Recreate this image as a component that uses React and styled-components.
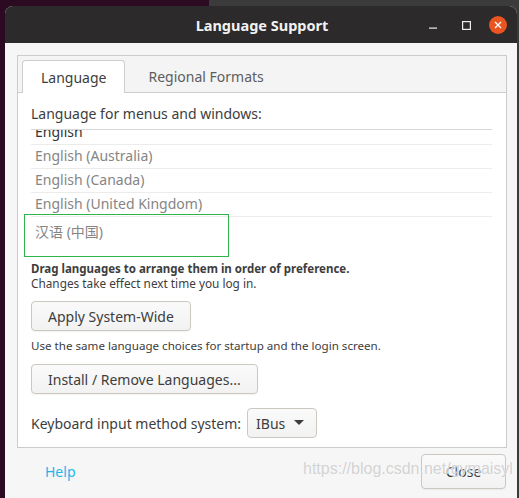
import React from 'react';
import styled, { createGlobalStyle } from 'styled-components';

const GlobalStyle = createGlobalStyle`
  html, body {
    margin: 0;
    padding: 0;
  }
  body {
    font-family: 'Noto Sans', 'Noto Sans CJK SC', sans-serif;
    color: #3d3d3d;
  }
`;

const Desktop = styled.div`
  width: 519px;
  height: 498px;
  padding: 6px 2px 0 5px;
  box-sizing: border-box;
  background: linear-gradient(to right, #2c0a22 0, #2c0a22 209px, #3b3b3b 209px);
  overflow: hidden;
`;

const Window = styled.div`
  position: relative;
  height: 100%;
  border-radius: 8px 8px 0 0;
  overflow: hidden;
  background: #f6f6f7;
  display: flex;
  flex-direction: column;
`;

const TitleBar = styled.div`
  height: 37px;
  flex: none;
  background: #2c2a2a;
  display: flex;
  align-items: center;
  justify-content: center;
  position: relative;
`;

const Title = styled.div`
  color: #f2f2f2;
  font-weight: bold;
  font-size: 14.5px;
  margin-left: 2px;
`;

const Controls = styled.div`
  position: absolute;
  right: 10px;
  top: 10px;
  display: flex;
  align-items: center;
`;

const CtrlBtn = styled.div`
  width: 34px;
  height: 18px;
  display: flex;
  align-items: center;
  justify-content: center;
`;

const CloseCircle = styled.div`
  width: 18px;
  height: 18px;
  border-radius: 50%;
  background: #e95420;
  display: flex;
  align-items: center;
  justify-content: center;
  margin-left: 6px;
`;

const Body = styled.div`
  flex: 1;
  padding: 12px 10px 0 12px;
  display: flex;
  flex-direction: column;
`;

const Notebook = styled.div`
  border: 1px solid #cbcbcb;
  background: #fff;
  height: 393px;
  box-sizing: border-box;
  display: flex;
  flex-direction: column;
`;

const TabStrip = styled.div`
  height: 37px;
  flex: none;
  background: #f4f4f4;
  border-bottom: 1px solid #cdcdcd;
  box-sizing: border-box;
  display: flex;
  align-items: flex-end;
  padding-left: 4px;
`;

const Tab = styled.div`
  height: ${({ $active }) => ($active ? '33px' : '32px')};
  box-sizing: border-box;
  padding: 0 ${({ $active }) => ($active ? '18px' : '22px')};
  display: flex;
  align-items: center;
  font-size: 14px;
  margin-bottom: ${({ $active }) => ($active ? '-1px' : '0')};
  color: ${({ $active }) => ($active ? '#3d3d3d' : '#5d5d5d')};
  background: ${({ $active }) => ($active ? '#fff' : 'transparent')};
  border: ${({ $active }) => ($active ? '1px solid #cdcdcd' : '1px solid transparent')};
  border-bottom: none;
  border-radius: 4px 4px 0 0;
`;

const Page = styled.div`
  position: relative;
  padding: 12px 13px 0 13px;
  display: flex;
  flex-direction: column;
`;

const Label = styled.div`
  font-size: 14px;
  line-height: 18px;
`;

const ListView = styled.div`
  margin-top: 6px;
  margin-right: 1px;
  height: 128px;
  overflow: hidden;
  border-top: 1px solid #d8d8d8;
`;

const ListInner = styled.div`
  margin-top: -9px;
`;

const Row = styled.div`
  height: 24px;
  box-sizing: border-box;
  padding: ${({ $last }) => ($last ? '4px' : '0')} 0 0 4px;
  font-size: 14px;
  line-height: 22px;
  color: ${({ $primary }) => ($primary ? '#333' : '#858585')};
  border-bottom: ${({ $last }) => ($last ? 'none' : '1px solid #ececec')};
`;

const DropHighlight = styled.div`
  position: absolute;
  left: 6px;
  top: 121px;
  width: 205px;
  height: 43px;
  border: 1px solid #2fb44a;
  box-sizing: border-box;
  pointer-events: none;
`;

const Hint = styled.div`
  margin-top: ${({ $bold }) => ($bold ? '3px' : '0')};
  font-size: ${({ $bold }) => ($bold ? '11.5px' : '11.8px')};
  line-height: 15px;
  font-weight: ${({ $bold }) => ($bold ? 'bold' : 'normal')};
`;

const Button = styled.div`
  align-self: flex-start;
  height: 30px;
  box-sizing: border-box;
  padding: 0 16px;
  display: flex;
  align-items: center;
  font-size: 14px;
  color: #3d3d3d;
  border: 1px solid #cdc7c2;
  border-radius: 4px;
  background: linear-gradient(#fafafa, #f2f2f2);
  box-shadow: 0 1px 1px rgba(0, 0, 0, 0.05);
  margin-top: ${({ $mt }) => $mt || 0}px;
`;

const SmallNote = styled.div`
  margin-top: 7px;
  font-size: 11.6px;
  line-height: 15px;
`;

const KbRow = styled.div`
  margin-top: 14px;
  display: flex;
  align-items: center;
  gap: 6px;
  font-size: 14px;
`;

const Combo = styled.div`
  height: 30px;
  box-sizing: border-box;
  padding: 0 12px 0 8px;
  display: flex;
  align-items: center;
  gap: 9px;
  font-size: 14px;
  border: 1px solid #cdc7c2;
  border-radius: 4px;
  background: linear-gradient(#fafafa, #f2f2f2);
`;

const Footer = styled.div`
  position: relative;
  flex: 1;
  display: flex;
  align-items: flex-start;
  justify-content: space-between;
  padding: 6px 0 0 28px;
`;

const HelpLink = styled.div`
  margin-top: 8px;
  font-size: 14px;
  color: #1fb5ec;
`;

const CloseButton = styled(Button)`
  height: 35px;
  width: 85px;
  justify-content: center;
  padding: 0;
  margin-right: 1px;
`;

const Watermark = styled.div`
  position: absolute;
  left: 286px;
  top: 11px;
  font-family: 'Liberation Sans', Arial, sans-serif;
  font-size: 16px;
  line-height: 20px;
  color: rgba(205, 205, 205, 0.9);
  text-shadow: 0 0 1px rgba(255, 255, 255, 0.9);
  pointer-events: none;
  white-space: nowrap;
`;

const languages = [
  'English',
  'English (Australia)',
  'English (Canada)',
  'English (United Kingdom)',
  '汉语 (中国)',
];

const App = () => (
  <>
    <GlobalStyle />
    <Desktop>
      <Window>
        <TitleBar>
          <Title>Language Support</Title>
          <Controls>
            <CtrlBtn>
              <svg width="9" height="9" viewBox="0 0 9 9">
                <rect x="1" y="6.5" width="8" height="1.2" fill="#eee" />
              </svg>
            </CtrlBtn>
            <CtrlBtn>
              <svg width="9" height="9" viewBox="0 0 9 9">
                <rect x="0.6" y="0.6" width="7.8" height="7.8" fill="none" stroke="#eee" strokeWidth="1.2" />
              </svg>
            </CtrlBtn>
            <CloseCircle>
              <svg width="8" height="8" viewBox="0 0 8 8">
                <path d="M1 1L7 7M7 1L1 7" stroke="#fff" strokeWidth="1.4" />
              </svg>
            </CloseCircle>
          </Controls>
        </TitleBar>
        <Body>
          <Notebook>
            <TabStrip>
              <Tab $active>Language</Tab>
              <Tab>Regional Formats</Tab>
            </TabStrip>
            <Page>
              <Label>Language for menus and windows:</Label>
              <ListView>
                <ListInner>
                  {languages.map((l, i) => (
                    <Row key={l} $primary={i === 0} $last={i === languages.length - 1}>
                      {l}
                    </Row>
                  ))}
                </ListInner>
              </ListView>
              <DropHighlight />
              <Hint $bold>Drag languages to arrange them in order of preference.</Hint>
              <Hint>Changes take effect next time you log in.</Hint>
              <Button $mt={10}>Apply System-Wide</Button>
              <SmallNote>Use the same language choices for startup and the login screen.</SmallNote>
              <Button $mt={11}>Install / Remove Languages...</Button>
              <KbRow>
                Keyboard input method system:
                <Combo>
                  IBus
                  <svg width="10" height="6" viewBox="0 0 10 6">
                    <path d="M0 0H10L5 5Z" fill="#3d3d3d" />
                  </svg>
                </Combo>
              </KbRow>
            </Page>
          </Notebook>
          <Footer>
            <HelpLink>Help</HelpLink>
            <CloseButton>Close</CloseButton>
            <Watermark>https://blog.csdn.net/gymaisyl</Watermark>
          </Footer>
        </Body>
      </Window>
    </Desktop>
  </>
);

export default App;
